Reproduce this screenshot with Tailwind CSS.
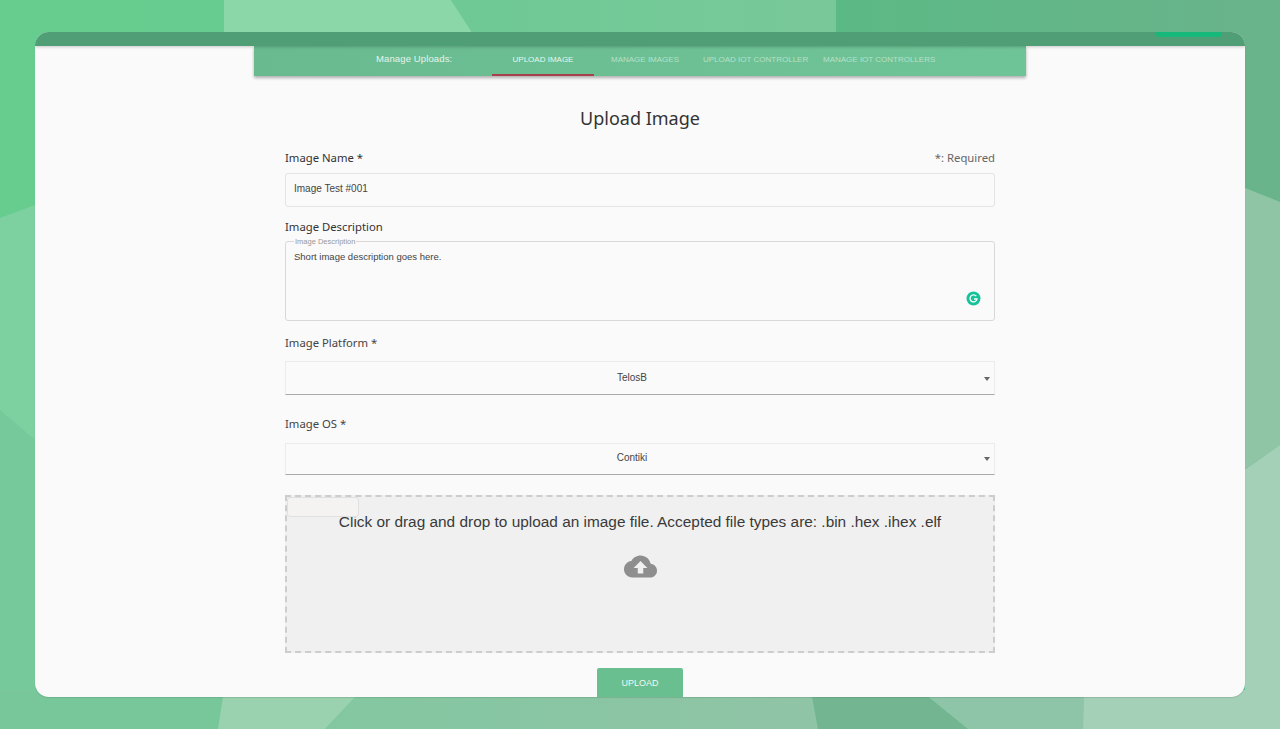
<!DOCTYPE html>
<html lang="en">
<head>
    <meta charset="UTF-8">
    <meta name="viewport" content="width=device-width, initial-scale=1.0">
    <title>Upload Image</title>
    <script src="https://cdn.jsdelivr.net/npm/@tailwindcss/browser@4"></script>
</head>
<body class="relative h-[729px] w-[1280px] overflow-hidden bg-[#6fc596] font-['Noto_Sans',sans-serif]">
    <!-- Wallpaper -->
    <svg class="absolute inset-0" width="1280" height="729" viewBox="0 0 1280 729">
        <defs>
            <linearGradient id="topLeft" x1="0" y1="0" x2="1" y2="0"><stop offset="0" stop-color="#66cd8f"/><stop offset="1" stop-color="#64c88f"/></linearGradient>
            <linearGradient id="topMid" x1="0" y1="0" x2="1" y2="0"><stop offset="0" stop-color="#6ec994"/><stop offset="1" stop-color="#79c89a"/></linearGradient>
            <linearGradient id="topRight" x1="0" y1="0" x2="1" y2="0"><stop offset="0" stop-color="#5bb985"/><stop offset="1" stop-color="#6ab38b"/></linearGradient>
            <linearGradient id="bottomMid" x1="0" y1="0" x2="1" y2="0"><stop offset="0" stop-color="#83c7a0"/><stop offset="1" stop-color="#90c4a6"/></linearGradient>
        </defs>
        <rect width="1280" height="729" fill="url(#topLeft)"/>
        <path d="M0 218 L35 205 L35 729 L0 729Z" fill="#7dd09f"/>
        <path d="M0 410 L35 440 L35 729 L0 729Z" fill="#76c99b"/>
        <path d="M224 0 L451 0 L490 60 L224 60Z" fill="#8bd7a8"/>
        <path d="M451 0 L836 0 L836 60 L490 60Z" fill="url(#topMid)"/>
        <path d="M836 0 L1280 0 L1280 202 L1245 188 L1245 60 L836 60Z" fill="url(#topRight)"/>
        <path d="M1245 188 L1280 202 L1280 729 L1245 729Z" fill="#8fc4a5"/>
        <path d="M1245 470 L1280 445 L1280 729 L1245 729Z" fill="#a3d0b6"/>
        <rect x="0" y="690" width="230" height="39" fill="#78c79b"/>
        <path d="M224 690 L362 690 L325 729 L218 729Z" fill="#9ad2b0"/>
        <path d="M362 690 L811 690 L818 729 L325 729Z" fill="url(#bottomMid)"/>
        <path d="M811 690 L920 690 L968 729 L818 729Z" fill="#73b590"/>
        <path d="M920 690 L1084 690 L1083 729 L968 729Z" fill="#8ec4a8"/>
        <path d="M1084 690 L1280 690 L1280 729 L1083 729Z" fill="#a4d0b7"/>
    </svg>

    <div class="relative flex pl-[35px] pt-[32px]">
        <!-- App window -->
        <main class="relative flex h-[665px] w-[1210px] flex-col items-center overflow-hidden rounded-[14px] bg-[#fafafa] shadow-[0_1px_1px_rgba(60,100,80,0.2)]">
            <div class="relative h-[14px] w-full shrink-0 bg-[#4f9e75] shadow-[0_1px_3px_rgba(0,0,0,0.2)]">
                <div class="absolute right-[23px] top-0 h-[5px] w-[66px] rounded-b-[3px] bg-[#17b97b]"></div>
            </div>

            <!-- Sub navigation -->
            <nav class="flex h-[30px] w-[772px] shrink-0 items-center whitespace-nowrap bg-gradient-to-r from-[#69bb8f] to-[#6fc497] pb-[3px] pl-[122px] font-['Liberation_Sans',sans-serif] shadow-[0_2px_3px_rgba(0,0,0,0.3)]">
                <span class="w-[116px] text-[9.5px] tracking-[0.12px] text-[#e6f3ec]">Manage Uploads:</span>
                <a class="mb-[-3px] flex h-[30px] w-[102px] items-center justify-center border-b-2 border-[#a8404c] text-[8px] text-[#e8f5ee]">UPLOAD IMAGE</a>
                <a class="ml-[17px] w-[67px] text-center text-[8px] text-[#b7e0c8]">MANAGE IMAGES</a>
                <a class="ml-[25px] w-[105px] text-center text-[8px] text-[#b7e0c8]">UPLOAD IOT CONTROLLER</a>
                <a class="ml-[15px] w-[112px] text-center text-[8px] text-[#b7e0c8]">MANAGE IOT CONTROLLERS</a>
            </nav>

            <form class="flex w-[710px] shrink-0 flex-col">
                <h1 class="mt-[30px] h-[24px] text-center text-[18px] leading-[24px] text-[#333]">Upload Image</h1>

                <div class="mt-[19px] flex h-[18px] items-center justify-between text-[11.3px]">
                    <label class="text-[#333]">Image Name *</label>
                    <span class="text-[#666]">*: Required</span>
                </div>
                <div class="mt-[6px] flex h-[34px] items-center rounded-[3px] border border-[#e4e4e4] pb-[3px] pl-[8px] font-['Liberation_Sans',sans-serif] text-[10px] text-[#444]">Image Test #001</div>

                <label class="mt-[11px] h-[18px] text-[11.3px] leading-[18px] text-[#333]">Image Description</label>
                <div class="relative mt-[1px] h-[84px]">
                    <fieldset class="h-[84px] rounded-[3px] border border-[#d8d8d8] pl-[8px] font-['Liberation_Sans',sans-serif]">
                        <legend class="h-[9px] px-[1px] text-[7.5px] leading-[9px] text-[#999]">Image Description</legend>
                        <p class="mt-[4px] text-[9.5px] text-[#444]">Short image description goes here.</p>
                    </fieldset>
                    <svg class="absolute right-[14px] top-[54px]" width="15" height="15" viewBox="0 0 15 15">
                        <circle cx="7.5" cy="7.5" r="7" fill="#15c39a"/>
                        <path d="M10.3 5.2A3.5 3.5 0 1 0 11 8H8" fill="none" stroke="#fff" stroke-width="1.3"/>
                    </svg>
                </div>

                <label class="mt-[13px] h-[18px] text-[11.3px] leading-[18px] text-[#444]">Image Platform *</label>
                <div class="relative mt-[9px] flex h-[34px] items-center justify-center border border-[#ececec] border-b-[#a8a8a8] pb-[2px] pr-[16px] font-['Liberation_Sans',sans-serif] text-[10px] text-[#444]">
                    TelosB
                    <span class="absolute right-[4px] top-[15px] h-0 w-0 border-x-[3px] border-t-[4px] border-x-transparent border-t-[#666]"></span>
                </div>

                <label class="mt-[20px] h-[18px] text-[11.3px] leading-[18px] text-[#444]">Image OS *</label>
                <div class="relative mt-[10px] flex h-[32px] items-center justify-center border border-[#ececec] border-b-[#a8a8a8] pb-[4px] pr-[16px] font-['Liberation_Sans',sans-serif] text-[10px] text-[#444]">
                    Contiki
                    <span class="absolute right-[4px] top-[13px] h-0 w-0 border-x-[3px] border-t-[4px] border-x-transparent border-t-[#666]"></span>
                </div>

                <!-- Drop zone -->
                <div class="relative mt-[20px] flex h-[158px] flex-col items-center border-2 border-dashed border-[#cdcdcd] bg-[#f0f0f0] font-['Liberation_Sans',sans-serif]">
                    <button type="button" class="absolute left-0 top-0 h-[20px] w-[72px] rounded-[3px] border border-[#e0e0e0] bg-[#f4f3f2]"></button>
                    <p class="mt-[15px] whitespace-nowrap text-[15.4px] leading-[20px] text-[#3a3a3a]">Click or drag and drop to upload an image file. Accepted file types are: .bin .hex .ihex .elf</p>
                    <svg class="mt-[18px]" width="33" height="33" viewBox="0 0 24 24" fill="#8e8e8e">
                        <path d="M19.35 10.04C18.67 6.59 15.64 4 12 4 9.11 4 6.6 5.64 5.35 8.04 2.34 8.36 0 10.91 0 14c0 3.31 2.69 6 6 6h13c2.76 0 5-2.24 5-5 0-2.64-2.05-4.78-4.65-4.96zM14 13v4h-4v-4H7l5-5 5 5h-3z"/>
                    </svg>
                </div>

                <button type="button" class="mx-auto mt-[15px] h-[36px] w-[86px] rounded-[2px] bg-[#69bf90] pb-[4px] font-['Liberation_Sans',sans-serif] text-[9px] text-[#f0f8f3]">UPLOAD</button>
            </form>
        </main>
    </div>
</body>
</html>
